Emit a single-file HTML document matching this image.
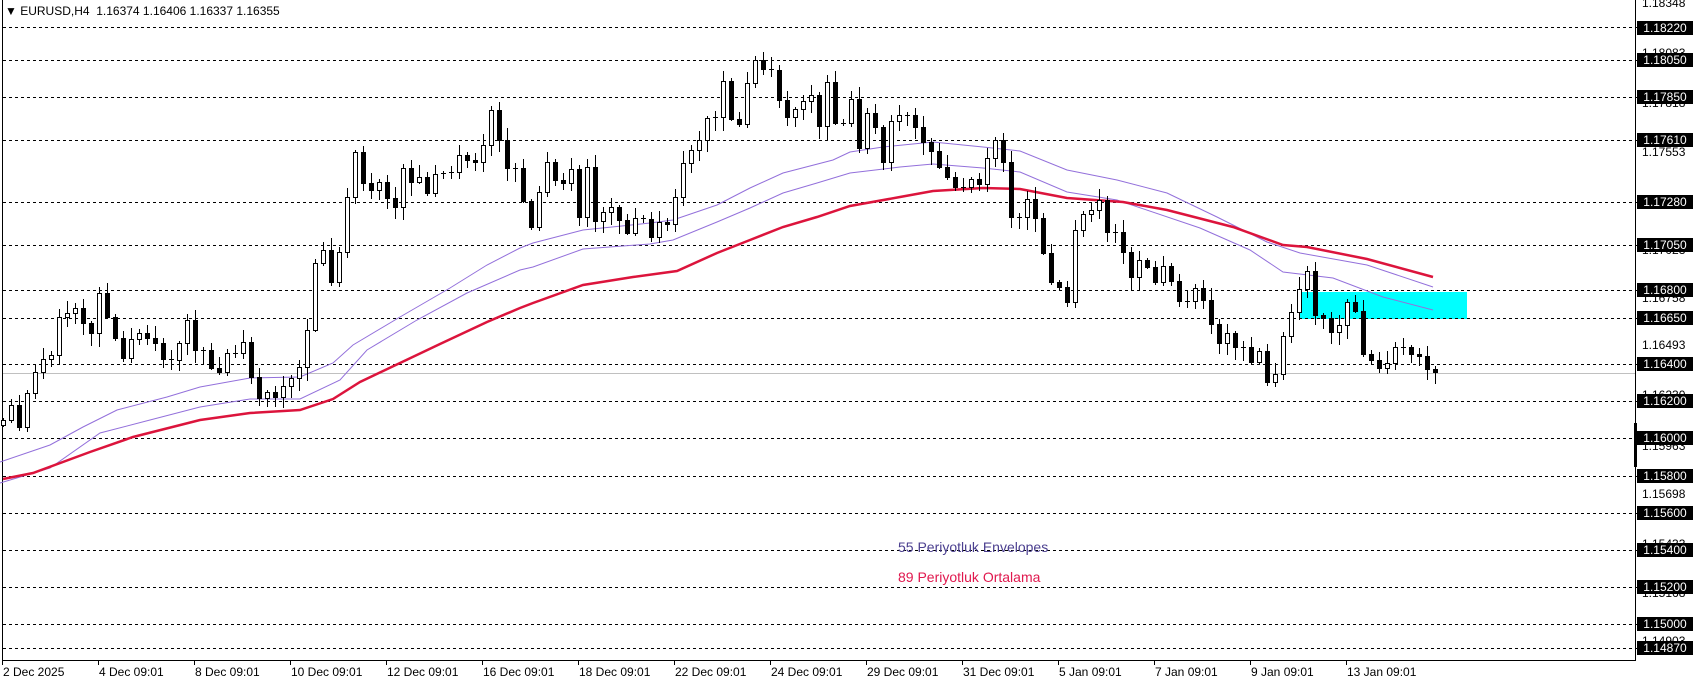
<!DOCTYPE html>
<html><head><meta charset="utf-8">
<style>
html,body{margin:0;padding:0;background:#fff;}
body{width:1699px;height:684px;position:relative;overflow:hidden;font-family:"Liberation Sans",sans-serif;}
svg{position:absolute;left:0;top:0;}
.t{position:absolute;font-size:12px;line-height:14px;white-space:nowrap;color:#000;}
.bx{position:absolute;left:1637px;width:56px;height:14px;background:#000;color:#fff;font-size:12px;line-height:14px;text-align:center;}
.pl{position:absolute;left:1642px;font-size:12px;line-height:14px;color:#000;}
.d{position:absolute;top:665px;font-size:12px;line-height:14px;color:#000;white-space:nowrap;}
</style></head><body>
<svg id="s" width="1699" height="684" xmlns="http://www.w3.org/2000/svg" shape-rendering="crispEdges"></svg>
<div class="t" style="left:5px;top:4px;">&#9660; EURUSD,H4&nbsp; 1.16374 1.16406 1.16337 1.16355</div>

<div class="pl" style="top:-4px">1.18348</div>
<div class="pl" style="top:46px">1.18083</div>
<div class="pl" style="top:96px">1.17818</div>
<div class="pl" style="top:145px">1.17553</div>
<div class="pl" style="top:243px">1.17023</div>
<div class="pl" style="top:291px">1.16758</div>
<div class="pl" style="top:338px">1.16493</div>
<div class="pl" style="top:388px">1.16230</div>
<div class="pl" style="top:439px">1.15963</div>
<div class="pl" style="top:487px">1.15698</div>
<div class="pl" style="top:537px">1.15433</div>
<div class="pl" style="top:586px">1.15168</div>
<div class="pl" style="top:634px">1.14903</div>

<div class="bx" style="top:21px">1.18220</div>
<div class="bx" style="top:53px">1.18050</div>
<div class="bx" style="top:90px">1.17850</div>
<div class="bx" style="top:133px">1.17610</div>
<div class="bx" style="top:195px">1.17280</div>
<div class="bx" style="top:238px">1.17050</div>
<div class="bx" style="top:283px">1.16800</div>
<div class="bx" style="top:311px">1.16650</div>
<div class="bx" style="top:357px">1.16400</div>
<div class="bx" style="top:394px">1.16200</div>
<div class="bx" style="top:431px">1.16000</div>
<div class="bx" style="top:469px">1.15800</div>
<div class="bx" style="top:506px">1.15600</div>
<div class="bx" style="top:543px">1.15400</div>
<div class="bx" style="top:580px">1.15200</div>
<div class="bx" style="top:617px">1.15000</div>
<div class="bx" style="top:641px">1.14870</div>

<div class="d" style="left:3px">2 Dec 2025</div>
<div class="d" style="left:99px">4 Dec 09:01</div>
<div class="d" style="left:195px">8 Dec 09:01</div>
<div class="d" style="left:291px">10 Dec 09:01</div>
<div class="d" style="left:387px">12 Dec 09:01</div>
<div class="d" style="left:483px">16 Dec 09:01</div>
<div class="d" style="left:579px">18 Dec 09:01</div>
<div class="d" style="left:675px">22 Dec 09:01</div>
<div class="d" style="left:771px">24 Dec 09:01</div>
<div class="d" style="left:867px">29 Dec 09:01</div>
<div class="d" style="left:963px">31 Dec 09:01</div>
<div class="d" style="left:1059px">5 Jan 09:01</div>
<div class="d" style="left:1155px">7 Jan 09:01</div>
<div class="d" style="left:1251px">9 Jan 09:01</div>
<div class="d" style="left:1347px">13 Jan 09:01</div>

<div class="t" style="left:898px;top:539px;font-size:14px;line-height:16px;color:#4b3f8f;">55 Periyotluk Envelopes</div>
<div class="t" style="left:898px;top:569px;font-size:14px;line-height:16px;color:#e0184e;">89 Periyotluk Ortalama</div>

<script>
(function(){
var s=document.getElementById('s');var h='';
h+='<rect x="1300" y="292" width="167" height="27" fill="#00ffff"/>';
[27,60,97,140,202,245,290,318,364,401,438,476,513,550,587,624,648].forEach(function(y){
h+='<line x1="3" y1="'+(y+.5)+'" x2="1635" y2="'+(y+.5)+'" stroke="#000" stroke-dasharray="3,3"/>';
h+='<line x1="1635" y1="'+(y+.5)+'" x2="1639" y2="'+(y+.5)+'" stroke="#000"/>';});
h+='<line x1="3" y1="373.5" x2="1635" y2="373.5" stroke="#c0c0c0"/>';
h+='<line x1="2.5" y1="0" x2="2.5" y2="660" stroke="#000"/>';
h+='<line x1="1635.5" y1="0" x2="1635.5" y2="661" stroke="#000"/>';
h+='<line x1="2" y1="660.5" x2="1636" y2="660.5" stroke="#000"/>';
h+='<rect x="1634" y="423" width="3" height="44" fill="#000"/>';
for(var k=0;k<15;k++){var tx=2+96*k;h+='<line x1="'+(tx+.5)+'" y1="660" x2="'+(tx+.5)+'" y2="665" stroke="#000"/>';}
function pl(pts,col,w){h+='<polyline fill="none" stroke="'+col+'" stroke-width="'+w+'" shape-rendering="auto" points="'+pts+'"/>';}
pl("0,462 50,445 83,427 117,410 167,397 200,387 250,378 300,377 333,363 353,345 400,317 450,288 487,265 520,248 533,243 583,230 650,223 673,220 717,205 750,188 783,173 833,160 850,152 883,147 933,142 983,147 1020,151 1067,170 1117,180 1167,193 1217,217 1267,242 1300,253 1367,265 1433,287","#9370db",1);
pl("0,483 50,468 100,433 150,420 200,407 250,399 300,399 340,380 367,350 417,320 467,293 520,270 533,267 583,249 650,244 673,240 717,222 750,208 783,193 817,183 850,173 900,167 933,164 983,168 1020,172 1067,192 1117,200 1200,228 1250,250 1283,272 1333,278 1383,297 1433,310","#9370db",1);
pl("3,479 33,473 90,452 133,437 200,420 250,413 300,410 333,399 360,382 400,363 440,344 487,322 520,308 533,303 583,285 633,277 677,271 717,253 750,240 783,227 817,217 850,206 900,197 933,191 983,188 1020,189 1067,198 1123,202 1167,210 1233,227 1283,245 1307,247 1367,259 1433,277","#dc143c",2.5);
var c=[420,405,427,393,372,359,355,317,313,308,323,333,293,317,338,358,339,333,338,343,359,360,343,320,350,350,368,372,353,353,342,377,398,392,397,386,378,367,330,263,250,282,252,197,152,183,190,182,198,207,168,182,177,193,174,173,172,155,160,162,145,110,140,168,168,201,227,192,162,180,183,169,217,167,221,212,207,220,233,218,219,237,222,224,197,163,150,140,118,117,81,119,124,83,60,69,70,100,117,109,101,95,126,82,123,123,99,148,113,127,162,121,115,115,127,142,151,167,177,187,187,179,184,158,140,162,217,217,199,218,253,282,287,302,230,214,210,200,232,232,252,277,260,267,282,266,281,301,301,288,300,324,343,333,347,347,362,351,382,374,336,312,289,271,315,318,332,325,302,311,354,360,368,363,347,347,354,356,369,372];
var op=425;
for(var i=0;i<c.length;i++){
var cx=3+8*i, cl=c[i], tp=Math.min(op,cl), bt=Math.max(op,cl);
var up=2+(i*37)%11, dn=2+(i*53)%13;
h+='<line x1="'+(cx+.5)+'" y1="'+(tp-up)+'" x2="'+(cx+.5)+'" y2="'+(bt+dn)+'" stroke="#000"/>';
if(bt-tp<2){h+='<line x1="'+(cx-2)+'" y1="'+(tp+.5)+'" x2="'+(cx+3)+'" y2="'+(tp+.5)+'" stroke="#000"/>';}
else if(cl<op){h+='<rect x="'+(cx-1.5)+'" y="'+(tp+.5)+'" width="4" height="'+(bt-tp)+'" fill="#fff" stroke="#000"/>';}
else{h+='<rect x="'+(cx-2)+'" y="'+tp+'" width="5" height="'+(bt-tp+1)+'" fill="#000"/>';}
op=cl;}
s.innerHTML=h;
})();
</script>
</body></html>
